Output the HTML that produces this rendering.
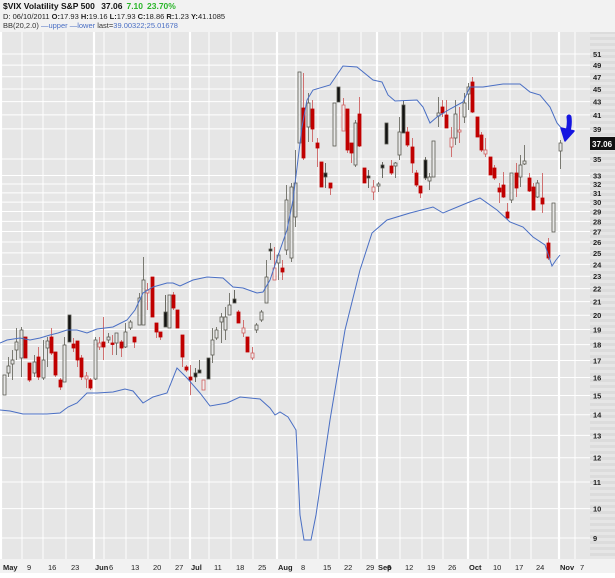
<!DOCTYPE html>
<html><head><meta charset="utf-8"><style>
html,body{margin:0;padding:0;background:#fff;}
body{width:615px;height:573px;overflow:hidden;font-family:"Liberation Sans",sans-serif;}
</style></head><body>
<svg id="s" width="615" height="573" xmlns="http://www.w3.org/2000/svg" font-family="Liberation Sans, sans-serif">
<rect x="0" y="0" width="615" height="573" fill="#f2f2f2"/>
<rect x="0" y="32" width="590" height="527" fill="#e6e6e6"/>
<rect x="590" y="32" width="25" height="527" fill="#dcdcdc"/>
<g id="stripes"></g>
<g id="grid"></g>
<g id="candles"></g>
<polyline fill="none" stroke="#4a6fc4" stroke-width="1" points="0,343 7,340 20,338 30,340 40,338 50,335 58,333 67,330 77,330 87,333 97,329 113,327 127,320 135,310 143,293 153,287 167,283 173,283 180,286 193,280 207,277 223,278 233,287 243,288 257,293 263,292 270,280 280,250 287,230 293,200 302,127 307,100 313,90 330,85 343,66 357,67 373,80 382,82 388,95 395,101 417,100 423,107 430,123 437,117 450,109 463,102 470,87 483,87 503,84 520,84 530,92 540,95 550,107 557,123 563,130"/>
<polyline fill="none" stroke="#4a6fc4" stroke-width="1" points="0,410 10,411 23,414 47,414 60,413 68,407 77,403 87,393 97,393 113,392 125,389 133,391 143,403 153,397 167,393 177,368 187,378 200,393 210,406 227,403 240,397 260,399 270,408 275,415 280,412 288,417 296,430 300,515 304,540 311,540 316,515 330,420 345,330 360,270 372,233 387,220 410,213 433,207 443,213 467,203 480,198 497,210 510,222 523,227 533,237 545,245 552,266 556,260 560,255"/>
<path d="M569,117 Q570,124 568,131" fill="none" stroke="#1515e0" stroke-width="5" stroke-linecap="round"/>
<path d="M561,128 L574,131 L565,141 Z" fill="#1515e0" stroke="#1515e0" stroke-width="1.5" stroke-linejoin="round"/>
<rect x="590" y="137" width="25" height="13" fill="#111"/>
<text x="592" y="147" font-size="8" font-weight="bold" fill="#fff">37.06</text>
<g id="ylab" font-size="7.5" font-weight="bold" fill="#222"></g>
<g id="xlab" font-size="7.5" fill="#222"></g>
<text x="3" y="9" font-size="8.5" font-weight="bold" fill="#111">$VIX Volatility S&amp;P 500 <tspan dx="4">37.06</tspan><tspan dx="4" fill="#2ab52a">7.10</tspan><tspan dx="4" fill="#2ab52a">23.70%</tspan></text>
<text x="3" y="19" font-size="7.5" fill="#222">D: 06/10/2011 <tspan font-weight="bold">O:</tspan>17.93 <tspan font-weight="bold">H:</tspan>19.16 <tspan font-weight="bold">L:</tspan>17.93 <tspan font-weight="bold">C:</tspan>18.86 <tspan font-weight="bold">R:</tspan>1.23 <tspan font-weight="bold">Y:</tspan>41.1085</text>
<text x="3" y="28" font-size="7.5" fill="#333">BB(20,2.0) <tspan fill="#4a6fc4">—upper —lower</tspan> last=<tspan fill="#4a6fc4">39.00322;25.01678</tspan></text>
</svg>
<script>
var NS="http://www.w3.org/2000/svg";
function el(p,t,a){var e=document.createElementNS(NS,t);for(var k in a)e.setAttribute(k,a[k]);p.appendChild(e);return e;}
function Y(v){return 1151-279*Math.log(v);}
var g=document.getElementById('grid'),st=document.getElementById('stripes'),yl=document.getElementById('ylab'),xl=document.getElementById('xlab');
for(var y=34;y<559;y+=6)el(st,'rect',{x:590,y:y,width:25,height:3,fill:'#e6e6e6'});
var vals=[51,49,47,45,43,41,39,35,33,32,31,30,29,28,27,26,25,24,23,22,21,20,19,18,17,16,15,14,13,12,11,10,9];
vals.forEach(function(v){var y=Y(v);el(g,'line',{x1:0,x2:590,y1:y,y2:y,stroke:'#fff','stroke-width':1});var t=el(yl,'text',{x:593,y:y+3});t.textContent=v;});
var xs=[[4,"May",1],[25,"9"],[46,"16"],[69,"23"],[95,"Jun",1],[107,"6"],[129,"13"],[151,"20"],[173,"27"],[191,"Jul",1],[212,"11"],[234,"18"],[256,"25"],[278,"Aug",1],[299,"8"],[321,"15"],[342,"22"],[364,"29"],[378,"Sep",1],[403,"12"],[425,"19"],[446,"26"],[469,"Oct",1],[491,"10"],[513,"17"],[534,"24"],[560,"Nov",1],[578,"7"]];
xs.forEach(function(a){var lx=a[0];var gx=a[2]?lx:lx-3; if(a[2]){gx=a[0]===4?1:lx-1;}
 el(g,'line',{x1:gx,x2:gx,y1:32,y2:559,stroke:'#fff','stroke-width':a[2]?2.2:1});
 var t=el(xl,'text',{x:a[2]?lx-(a[0]===4?1:0):lx+2,y:570,'font-weight':a[2]?'bold':'normal'});t.textContent=a[1];});
var t=el(xl,'text',{x:387,y:570,'font-weight':'bold'});t.textContent="6";
var D=[[4,375,395,375,395,'h'],[8,357,377,366,373,'h'],[12,350,380,360,364,'h'],[16,328,360,342,350,'h'],[21,327,377,330,358,'h'],[25,337,358,337,358,'r'],[29,363,382,363,380,'r'],[34,355,377,362,373,'h'],[38,347,380,357,377,'r'],[43,340,380,360,378,'h'],[47,337,367,341,348,'h'],[51,328,355,337,353,'r'],[55,352,377,352,375,'r'],[60,378,390,380,387,'r'],[64,337,382,345,382,'h'],[69,315,342,315,342,'b'],[73,338,352,344,348,'r'],[77,341,367,341,360,'r'],[81,355,380,358,377,'r'],[86,372,388,376,379,'R'],[90,378,390,380,388,'r'],[95,337,380,340,379,'h'],[99,337,350,343,347,'R'],[103,317,360,342,347,'r'],[108,333,343,337,340,'h'],[112,335,355,343,344,'r'],[116,333,355,333,343,'h'],[121,340,357,342,348,'r'],[125,323,348,332,347,'h'],[130,320,330,322,328,'h'],[134,337,348,337,342,'r'],[139,293,325,298,325,'h'],[143,257,325,280,325,'h'],[147,283,310,290,293,'R'],[152,277,317,277,317,'r'],[156,323,338,323,332,'r'],[160,332,340,332,337,'r'],[165,295,327,312,327,'b'],[169,295,328,295,328,'h'],[173,292,310,295,308,'r'],[177,310,328,310,328,'r'],[182,335,367,335,357,'r'],[186,365,372,367,370,'r'],[190,365,395,377,380,'r'],[195,368,382,373,377,'b'],[199,360,373,370,373,'b'],[203,380,390,380,390,'R'],[208,358,379,358,379,'b'],[212,328,363,340,355,'h'],[216,327,340,330,338,'h'],[221,313,343,317,322,'h'],[225,307,340,317,330,'h'],[229,293,315,305,315,'h'],[234,290,303,299,303,'b'],[238,310,323,312,323,'r'],[243,320,337,328,333,'R'],[247,337,352,337,352,'r'],[252,347,360,353,358,'R'],[256,323,333,325,330,'h'],[261,310,322,312,320,'h'],[266,260,303,277,303,'h'],[270,243,260,249,251,'b'],[274,247,280,268,280,'R'],[278,253,280,255,263,'h'],[282,260,280,268,272,'r'],[286,185,255,200,250,'h'],[291,183,262,187,258,'h'],[295,150,227,183,217,'h'],[299,72,143,72,143,'h'],[303,73,160,108,158,'r'],[308,93,142,103,127,'h'],[312,100,142,109,129,'r'],[317,138,167,143,148,'r'],[321,162,187,162,187,'r'],[325,163,188,173,177,'b'],[330,183,195,183,188,'r'],[334,103,146,103,146,'h'],[338,87,102,87,102,'b'],[343,98,131,105,131,'R'],[347,109,153,109,150,'r'],[351,143,163,143,153,'r'],[355,120,167,123,165,'h'],[359,97,147,114,146,'r'],[364,168,183,168,183,'r'],[368,170,188,176,178,'b'],[373,180,200,187,192,'R'],[378,182,192,184,186,'h'],[382,162,178,165,168,'b'],[386,123,144,123,144,'b'],[391,160,175,166,173,'r'],[395,162,178,163,166,'h'],[399,117,160,132,155,'h'],[403,101,133,105,133,'b'],[407,127,147,132,145,'r'],[412,138,173,147,163,'r'],[416,170,187,173,185,'r'],[420,186,198,186,193,'r'],[425,157,180,160,178,'b'],[429,173,190,177,181,'h'],[433,141,177,141,177,'h'],[438,97,127,113,116,'h'],[442,100,117,107,113,'r'],[446,100,128,115,128,'r'],[451,127,157,138,147,'R'],[455,100,145,114,138,'h'],[459,107,143,130,132,'R'],[464,93,123,103,117,'h'],[468,83,110,87,94,'h'],[472,77,113,82,112,'r'],[477,117,137,117,137,'r'],[481,132,152,135,150,'r'],[485,138,157,150,154,'R'],[490,157,175,157,175,'r'],[494,165,180,168,178,'r'],[499,183,203,188,192,'r'],[503,172,198,185,197,'r'],[507,203,220,212,218,'r'],[511,173,203,173,200,'h'],[516,163,197,173,188,'r'],[520,155,187,165,177,'h'],[524,145,165,161,164,'h'],[529,173,192,178,191,'r'],[533,183,210,187,210,'r'],[537,180,198,183,197,'h'],[542,173,213,198,204,'r'],[548,238,260,243,258,'r'],[553,203,232,203,232,'h'],[560,140,169,143,151,'h']];
var cg=document.getElementById('candles');
D.forEach(function(c){var col={h:'#5a5a52',b:'#5a5a52',r:'#c00000',R:'#d06060'}[c[5]];var wc={h:'#7a7a72',b:'#6a6a62',r:'#d07070',R:'#d07070'}[c[5]];
 el(cg,'line',{x1:c[0]+.5,x2:c[0]+.5,y1:c[1],y2:c[2],stroke:wc,'stroke-width':1});
 var h=Math.max(c[4]-c[3],1.5);
 var fill={h:'#e8e8e8',b:'#111',r:'#c00000',R:'#eeeeee'}[c[5]];
 el(cg,'rect',{x:c[0]-1,y:c[3],width:3,height:h,fill:fill,stroke:col,'stroke-width':0.8});});
</script>
</body></html>
